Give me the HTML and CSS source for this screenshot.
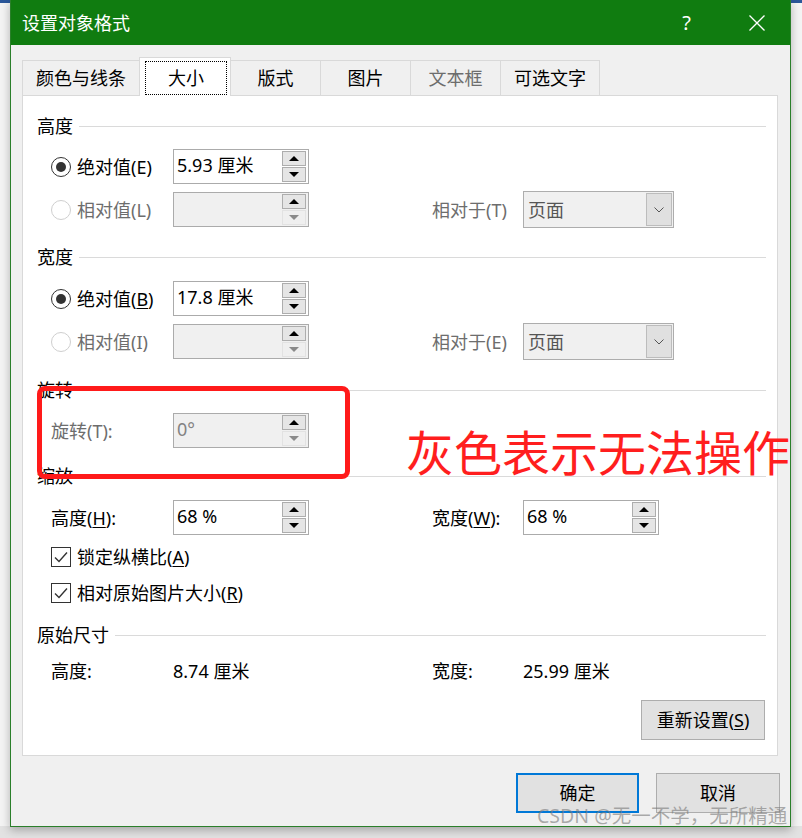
FILE: index.html
```html
<!DOCTYPE html>
<html lang="zh">
<head>
<meta charset="utf-8">
<title>设置对象格式</title>
<link rel="stylesheet" href="styles.css">
</head>
<body>
<div class="desk">
  <div class="dialog">
    <div class="titlebar">
      <span class="title">设置对象格式</span>
      <span class="help">?</span>
      <svg class="close" width="16" height="16" viewBox="0 0 16 16"><path d="M0.5 0.5L15.5 15.5M15.5 0.5L0.5 15.5" stroke="#fff" stroke-width="1.3" fill="none"/></svg>
    </div>
    <div class="dbody">
      <div class="tabs">
        <div class="tab t1">颜色与线条</div>
        <div class="tab sel"><span class="focus">大小</span></div>
        <div class="tab t3">版式</div>
        <div class="tab t4">图片</div>
        <div class="tab t5 dis">文本框</div>
        <div class="tab t6">可选文字</div>
      </div>
      <div class="panel">
        <div class="sec g19"><span>高度</span><i class="rule"></i></div>
        <div class="row g12">
          <div class="lab"><span class="radio on"></span>绝对值(E)</div>
          <div class="spin"><span class="val">5.93 厘米</span><span class="btns"><b class="up"></b><b class="dn"></b></span></div>
        </div>
        <div class="row g8">
          <div class="lab dis"><span class="radio off"></span>相对值(L)</div>
          <div class="spin disabled"><span class="val"></span><span class="btns"><b class="up"></b><b class="dn off"></b></span></div>
          <div class="rlab dis">相对于(T)</div>
          <div class="combo"><span>页面</span><span class="cb"><svg width="10" height="6" viewBox="0 0 10 6"><path d="M0.5 0.5L5 5L9.5 0.5" stroke="#555" stroke-width="1" fill="none"/></svg></span></div>
        </div>

        <div class="sec g19"><span>宽度</span><i class="rule"></i></div>
        <div class="row g13">
          <div class="lab"><span class="radio on"></span>绝对值(<u>B</u>)</div>
          <div class="spin"><span class="val">17.8 厘米</span><span class="btns"><b class="up"></b><b class="dn"></b></span></div>
        </div>
        <div class="row g8">
          <div class="lab dis"><span class="radio off"></span>相对值(I)</div>
          <div class="spin disabled"><span class="val"></span><span class="btns"><b class="up"></b><b class="dn off"></b></span></div>
          <div class="rlab dis">相对于(E)</div>
          <div class="combo"><span>页面</span><span class="cb"><svg width="10" height="6" viewBox="0 0 10 6"><path d="M0.5 0.5L5 5L9.5 0.5" stroke="#555" stroke-width="1" fill="none"/></svg></span></div>
        </div>

        <div class="sec g20"><span>旋转</span><i class="rule"></i></div>
        <div class="row g12">
          <div class="lab dis">旋转(T):</div>
          <div class="spin disabled"><span class="val">0°</span><span class="btns"><b class="up"></b><b class="dn off"></b></span></div>
        </div>

        <div class="sec g17"><span>缩放</span><i class="rule"></i></div>
        <div class="row g13">
          <div class="lab">高度(<u>H</u>):</div>
          <div class="spin"><span class="val">68 %</span><span class="btns"><b class="up"></b><b class="dn"></b></span></div>
          <div class="rlab">宽度(<u>W</u>):</div>
          <div class="spin"><span class="val">68 %</span><span class="btns"><b class="up"></b><b class="dn"></b></span></div>
        </div>
        <div class="chk g11"><span class="box"><svg width="14" height="12" viewBox="0 0 14 12"><path d="M1 6.5L5 10.5L13 1.5" stroke="#333" stroke-width="1.4" fill="none"/></svg></span>锁定纵横比(<u>A</u>)</div>
        <div class="chk g14"><span class="box"><svg width="14" height="12" viewBox="0 0 14 12"><path d="M1 6.5L5 10.5L13 1.5" stroke="#333" stroke-width="1.4" fill="none"/></svg></span>相对原始图片大小(<u>R</u>)</div>

        <div class="sec g20"><span>原始尺寸</span><i class="rule"></i></div>
        <div class="orow g14">
          <span class="ol">高度:</span><span class="ov">8.74 厘米</span><span class="ol2">宽度:</span><span>25.99 厘米</span>
        </div>
        <div class="reset g18">重新设置(<u>S</u>)</div>
      </div>
      <div class="actions">
        <div class="btn def">确定</div>
        <div class="btn">取消</div>
      </div>
    </div>
  </div>

  <div class="redbox"></div>
  <div class="redtext">灰色表示无法操作</div>
  <div class="wm">CSDN @无一不学，无所精通</div>
</div>
</body>
</html>
```

FILE: styles.css
```css
* { box-sizing: border-box; }

body {
  margin: 0;
  width: 802px;
  height: 838px;
  overflow: hidden;
  background: #ececec;
  font-family: "Noto Sans", "Noto Sans CJK SC", sans-serif;
  font-size: 18px;
  color: #000;
}

.desk {
  position: relative;
  width: 802px;
  height: 838px;
  padding-left: 10px;
  background: linear-gradient(#2b579a 0 3px, #f4f4f4 3px 826px, #e2e2e2 826px);
}

.dialog {
  width: 781px;
  height: 827px;
  border: 1px solid #2a7f2a;
  border-top: none;
  background: #f0f0f0;
  display: flex;
  flex-direction: column;
  box-shadow: 0 3px 9px rgba(0, 0, 0, 0.28);
}

.titlebar {
  height: 45px;
  flex: none;
  background: #107c10;
  color: #fff;
  display: flex;
  align-items: center;
  padding: 0 25px 0 11px;
}

.title { line-height: 22px; }

.help {
  margin-left: auto;
  margin-right: 58px;
  font-size: 20px;
  line-height: 22px;
  font-family: "Noto Sans", sans-serif;
}

.dbody {
  flex: 1;
  display: flex;
  flex-direction: column;
  padding: 12px 12px 0 11px;
}

.tabs {
  display: flex;
  align-items: flex-end;
  height: 38px;
  flex: none;
}

.tab {
  height: 35px;
  border: 1px solid #d9d9d9;
  border-left: none;
  border-bottom: none;
  display: flex;
  align-items: center;
  justify-content: center;
  line-height: 22px;
}

.t1 { width: 118px; border-left: 1px solid #d9d9d9; }
.t3, .t4, .t5 { width: 90px; }
.t6 { width: 99px; }

.tab.sel {
  width: 92px;
  height: 39px;
  margin-left: -1px;
  margin-bottom: -1px;
  border-left: 1px solid #d9d9d9;
  background: #fff;
  padding: 3px 3px 1px 5px;
  position: relative;
  z-index: 1;
}

.focus {
  flex: 1;
  align-self: stretch;
  border: 1px dotted #000;
  display: flex;
  align-items: center;
  justify-content: center;
}

.dis { color: #6d6d6d; }

.panel {
  height: 661px;
  flex: none;
  background: #fff;
  border: 1px solid #d9d9d9;
  display: flex;
  flex-direction: column;
}

.g8 { margin-top: 8px; }
.g11 { margin-top: 11px; }
.g12 { margin-top: 12px; }
.g13 { margin-top: 13px; }
.g14 { margin-top: 14px; }
.g17 { margin-top: 17px; }
.g18 { margin-top: 18px; }
.g19 { margin-top: 19px; }
.g20 { margin-top: 20px; }

.sec {
  display: flex;
  align-items: center;
  height: 22px;
  line-height: 22px;
  margin-left: 14px;
  margin-right: 11px;
}

.rule {
  flex: 1;
  height: 1px;
  background: #dadada;
  margin-left: 6px;
}

.row {
  display: flex;
  align-items: center;
  height: 35px;
  padding-left: 28px;
}

.lab {
  width: 122px;
  display: flex;
  align-items: center;
  line-height: 22px;
}

u { text-underline-offset: 2px; text-decoration-thickness: 1px; }

.radio {
  width: 20px;
  height: 20px;
  border: 1px solid #333;
  border-radius: 50%;
  margin-right: 6px;
  display: flex;
  align-items: center;
  justify-content: center;
  flex: none;
}

.radio.on::after {
  content: "";
  width: 10px;
  height: 10px;
  border-radius: 50%;
  background: #333;
}

.radio.off { border-color: #cfcfcf; }

.spin {
  width: 136px;
  height: 35px;
  border: 1px solid #ababab;
  background: #fff;
  display: flex;
  align-items: center;
  padding: 0 2px 0 3px;
  flex: none;
}

.spin.disabled { background: #f0f0f0; color: #838383; }

.val {
  line-height: 22px;
  padding-bottom: 3px;
}

.btns {
  margin-left: auto;
  display: flex;
  flex-direction: column;
}

.btns b {
  width: 24px;
  height: 15px;
  border: 1px solid #adadad;
  background: #e5e5e5;
  display: flex;
  align-items: center;
  justify-content: center;
}

.btns b + b { margin-top: 1px; }

.up::before {
  content: "";
  border-left: 5px solid transparent;
  border-right: 5px solid transparent;
  border-bottom: 5px solid #000;
}

.dn::before {
  content: "";
  border-left: 5px solid transparent;
  border-right: 5px solid transparent;
  border-top: 5px solid #000;
}

.btns .dn.off { border-color: #e2e2e2; background: #efefef; }
.dn.off::before { border-top-color: #8a8a8a; }

.rlab {
  margin-left: 123px;
  width: 91px;
  line-height: 22px;
  flex: none;
}

.combo {
  width: 151px;
  height: 37px;
  border: 1px solid #adadad;
  background: #f0f0f0;
  display: flex;
  align-items: center;
  padding: 1px 1px 1px 4px;
  color: #555;
  line-height: 22px;
  flex: none;
}

.cb {
  margin-left: auto;
  width: 26px;
  align-self: stretch;
  border: 1px solid #bcbcbc;
  background: #e0e0e0;
  display: flex;
  align-items: center;
  justify-content: center;
}

.chk {
  display: flex;
  align-items: center;
  height: 22px;
  padding-left: 28px;
  line-height: 22px;
}

.box {
  width: 20px;
  height: 20px;
  border: 1px solid #333;
  margin-right: 6px;
  display: flex;
  align-items: center;
  justify-content: center;
  flex: none;
}

.orow {
  display: flex;
  height: 22px;
  line-height: 22px;
  padding-left: 28px;
}

.ol { width: 122px; }
.ov { width: 259px; }
.ol2 { width: 91px; }

.reset {
  align-self: flex-end;
  margin-right: 12px;
  width: 124px;
  height: 40px;
  border: 1px solid #adadad;
  background: #e1e1e1;
  display: flex;
  align-items: center;
  justify-content: center;
  line-height: 22px;
}

.actions {
  display: flex;
  justify-content: flex-end;
  gap: 17px;
  margin-top: 17px;
  margin-right: -2px;
}

.btn {
  width: 124px;
  height: 40px;
  border: 1px solid #adadad;
  background: #e1e1e1;
  display: flex;
  align-items: center;
  justify-content: center;
  line-height: 22px;
}

.btn.def { width: 123px; border: 2px solid #0078d7; }

.redbox {
  position: absolute;
  left: 37px;
  top: 386px;
  width: 313px;
  height: 93px;
  border: 5px solid #ff1a1a;
  border-radius: 8px;
}

.redtext {
  position: absolute;
  left: 406px;
  top: 427px;
  font-size: 48px;
  line-height: 52px;
  color: #ff1e1e;
  white-space: nowrap;
}

.wm {
  position: absolute;
  left: 537px;
  top: 804px;
  font-size: 19.5px;
  line-height: 24px;
  color: rgba(120, 120, 120, 0.6);
  white-space: nowrap;
}
```
